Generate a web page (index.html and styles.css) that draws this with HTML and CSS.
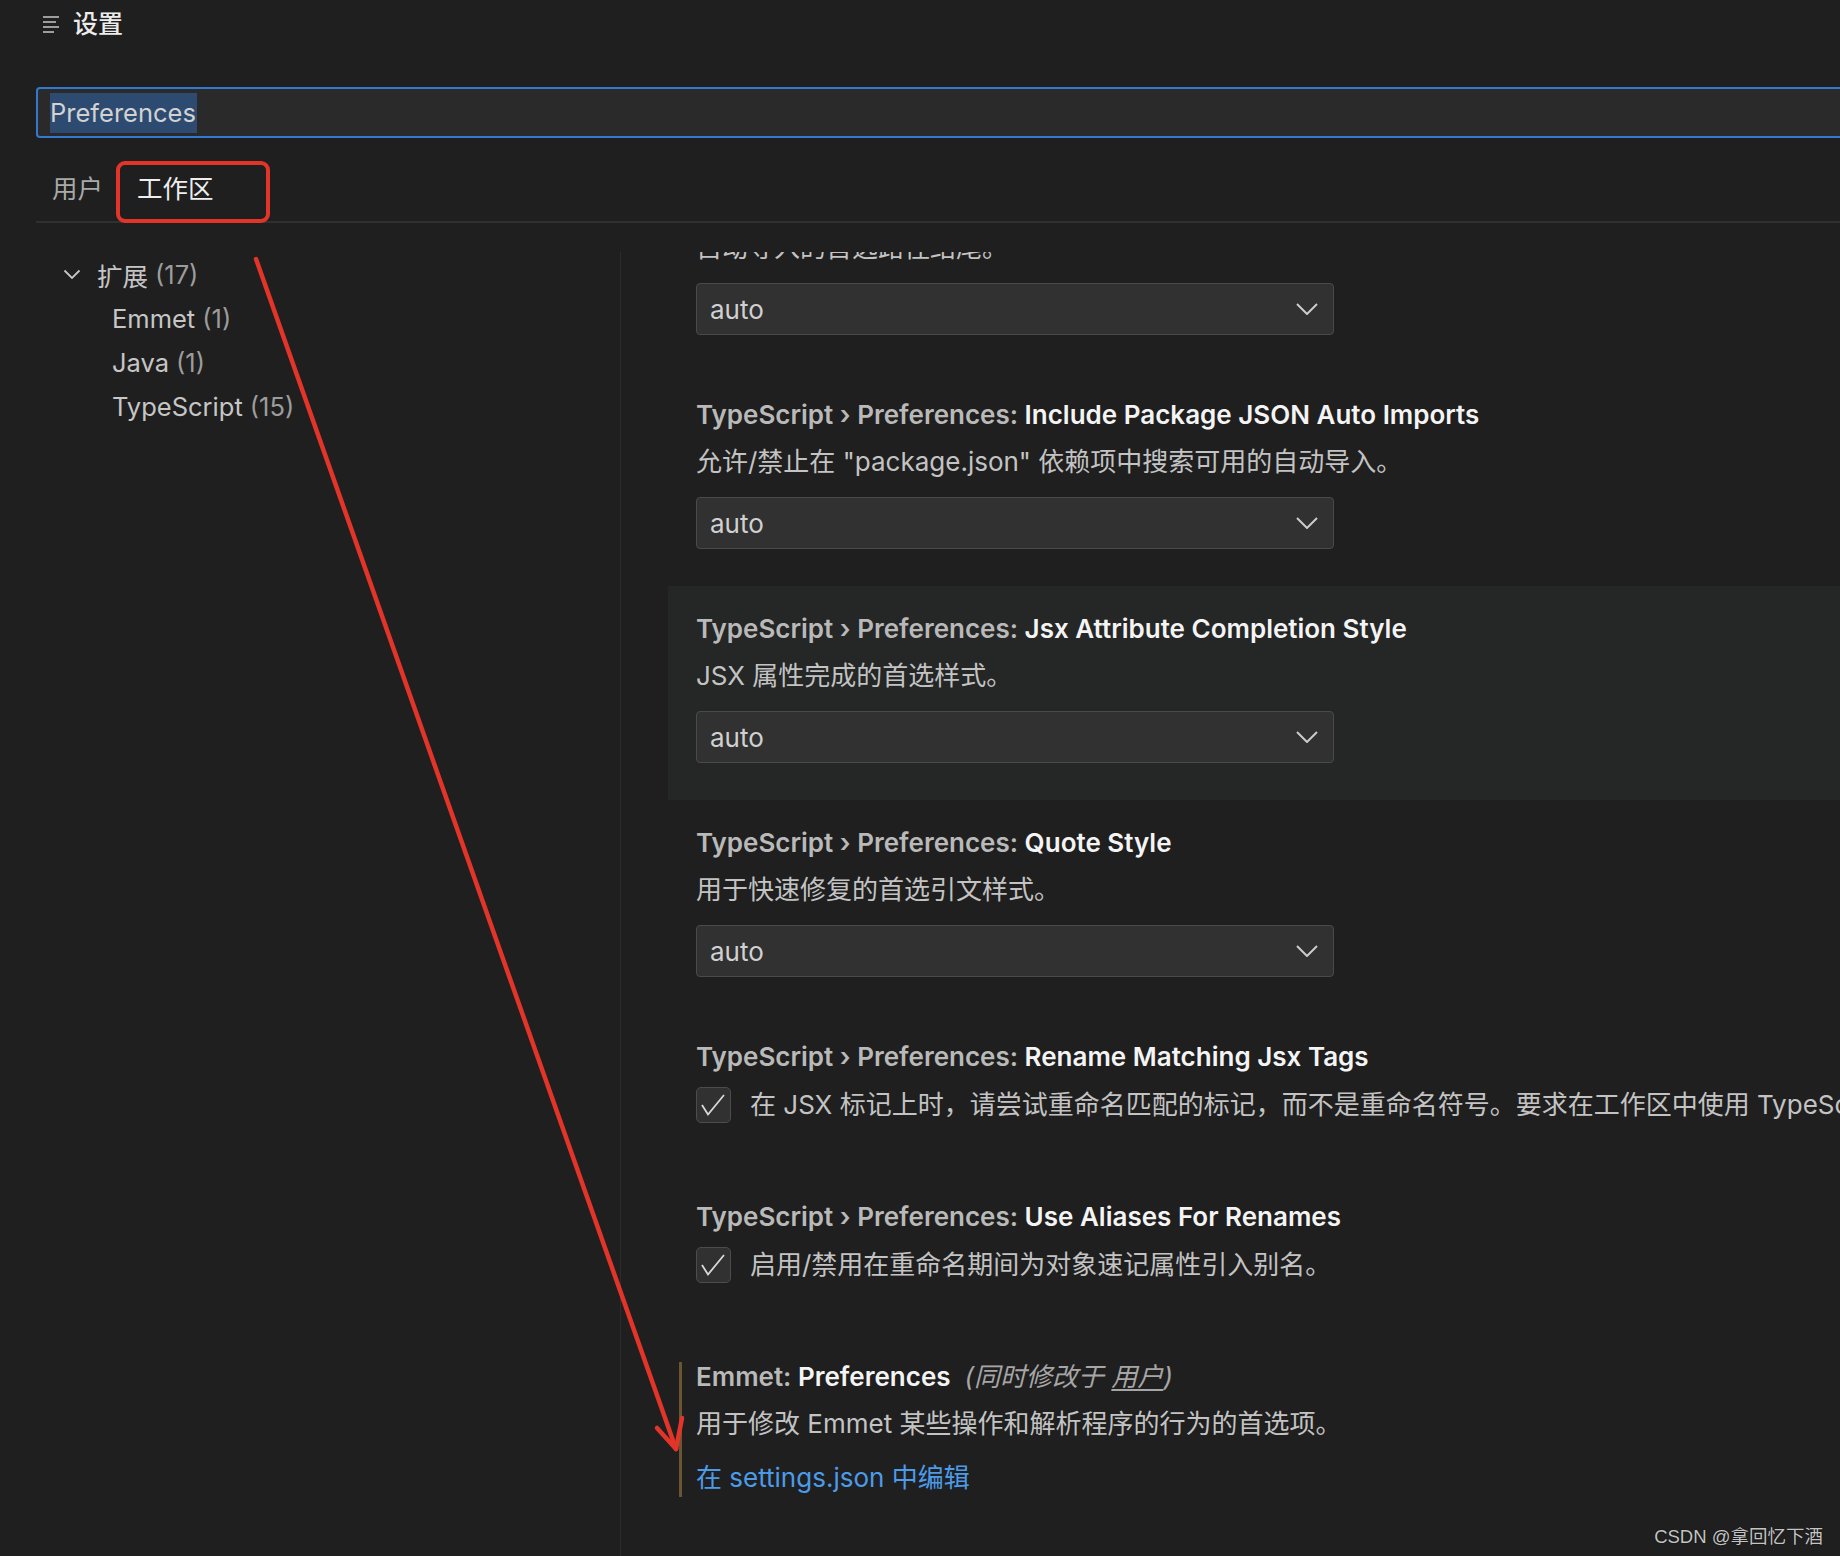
FILE: index.html
```html
<!DOCTYPE html>
<html lang="zh-CN">
<head>
<meta charset="utf-8">
<title>设置</title>
<link rel="stylesheet" href="styles.css">
</head>
<body>
<div class="app">
  <header class="titlebar">
    <svg class="menu-icon" width="17" height="18" viewBox="0 0 17 18">
      <path d="M0 2h16M0 7h13M0 12h16M0 17h11" stroke="#c8c8c8" stroke-width="1.6" fill="none"/>
    </svg>
    <span class="title-text">设置</span>
  </header>

  <div class="search"><span class="sel">Preferences</span></div>

  <nav class="tabs">
    <span class="tab">用户</span>
    <span class="tab active">工作区</span>
  </nav>

  <div class="main">
    <aside class="toc">
      <div class="toc-row toc-group">
        <svg class="toc-chev" width="18" height="10" viewBox="0 0 18 10"><path d="M1.5 1.5l7.5 7.5 7.5-7.5" stroke="#c5c5c5" stroke-width="1.8" fill="none"/></svg>
        <span class="toc-name">扩展</span><span class="toc-count">(17)</span>
      </div>
      <div class="toc-row toc-child"><span class="toc-name">Emmet</span><span class="toc-count">(1)</span></div>
      <div class="toc-row toc-child"><span class="toc-name">Java</span><span class="toc-count">(1)</span></div>
      <div class="toc-row toc-child"><span class="toc-name">TypeScript</span><span class="toc-count">(15)</span></div>
    </aside>

    <section class="list">
      <div class="scroll">
        <div class="setting">
          <div class="s-title"><span class="cat">TypeScript › Preferences: </span><span class="name">Import Module Specifier Ending</span></div>
          <div class="s-desc">自动导入的首选路径结尾。</div>
          <div class="select"><span>auto</span><svg width="22" height="12" viewBox="0 0 22 12"><path d="M1 1l10 10 10-10" stroke="#cccccc" stroke-width="2" fill="none"/></svg></div>
        </div>

        <div class="setting">
          <div class="s-title"><span class="cat">TypeScript › Preferences: </span><span class="name">Include Package JSON Auto Imports</span></div>
          <div class="s-desc">允许/禁止在 "package.json" 依赖项中搜索可用的自动导入。</div>
          <div class="select"><span>auto</span><svg width="22" height="12" viewBox="0 0 22 12"><path d="M1 1l10 10 10-10" stroke="#cccccc" stroke-width="2" fill="none"/></svg></div>
        </div>

        <div class="setting focused">
          <div class="s-title"><span class="cat">TypeScript › Preferences: </span><span class="name">Jsx Attribute Completion Style</span></div>
          <div class="s-desc">JSX 属性完成的首选样式。</div>
          <div class="select"><span>auto</span><svg width="22" height="12" viewBox="0 0 22 12"><path d="M1 1l10 10 10-10" stroke="#cccccc" stroke-width="2" fill="none"/></svg></div>
        </div>

        <div class="setting">
          <div class="s-title"><span class="cat">TypeScript › Preferences: </span><span class="name">Quote Style</span></div>
          <div class="s-desc">用于快速修复的首选引文样式。</div>
          <div class="select"><span>auto</span><svg width="22" height="12" viewBox="0 0 22 12"><path d="M1 1l10 10 10-10" stroke="#cccccc" stroke-width="2" fill="none"/></svg></div>
        </div>

        <div class="setting bool">
          <div class="s-title"><span class="cat">TypeScript › Preferences: </span><span class="name">Rename Matching Jsx Tags</span></div>
          <div class="check-row">
            <span class="checkbox"><svg width="35" height="36" viewBox="0 0 35 36"><path d="M6 18l6 9.5L28 8" stroke="#d8d8d8" stroke-width="1.8" fill="none"/></svg></span>
            <span class="s-desc inline">在 JSX 标记上时，请尝试重命名匹配的标记，而不是重命名符号。要求在工作区中使用 TypeScript 5.1+。</span>
          </div>
        </div>

        <div class="setting bool">
          <div class="s-title"><span class="cat">TypeScript › Preferences: </span><span class="name">Use Aliases For Renames</span></div>
          <div class="check-row">
            <span class="checkbox"><svg width="35" height="36" viewBox="0 0 35 36"><path d="M6 18l6 9.5L28 8" stroke="#d8d8d8" stroke-width="1.8" fill="none"/></svg></span>
            <span class="s-desc inline">启用/禁用在重命名期间为对象速记属性引入别名。</span>
          </div>
        </div>

        <div class="setting modified">
          <div class="mod-wrap">
            <div class="s-title"><span class="cat">Emmet: </span><span class="name">Preferences</span><span class="also">(同时修改于 <u>用户</u>)</span></div>
            <div class="s-desc">用于修改 Emmet 某些操作和解析程序的行为的首选项。</div>
            <div class="s-link">在 settings.json 中编辑</div>
          </div>
        </div>
      </div>
    </section>
  </div>
</div>

<div class="annot-box"></div>
<svg class="annot-arrow" width="1840" height="1556" viewBox="0 0 1840 1556">
  <g stroke="#e3342a" stroke-width="4.5" stroke-linecap="round" stroke-linejoin="round" fill="none">
    <path d="M256 259L676 1449"/>
    <path d="M657 1428L676 1449L682 1418"/>
  </g>
</svg>
<div class="watermark">CSDN @拿回忆下酒</div>
</body>
</html>
```

FILE: styles.css
```css
html, body {
  margin: 0;
  padding: 0;
}
body {
  width: 1840px;
  height: 1556px;
  overflow: hidden;
  background: #1f1f1f;
  color: #cccccc;
  font-family: "Inter", "Noto Sans CJK SC", sans-serif;
  font-size: 26px;
  position: relative;
}
.app {
  display: flex;
  flex-direction: column;
  height: 1556px;
}

/* title bar */
.titlebar {
  height: 48px;
  display: flex;
  align-items: center;
  padding-left: 43px;
  gap: 13px;
}
.menu-icon { display: block; }
.title-text {
  color: #ececec;
  font-size: 25px;
  line-height: 30px;
  font-weight: 500;
}

/* search */
.search {
  margin: 39px -20px 0 36px;
  height: 51px;
  box-sizing: border-box;
  border: 2px solid #3279cf;
  border-radius: 4px;
  background: #2a2a2a;
  display: flex;
  align-items: center;
  padding-left: 12px;
}
.sel {
  background: #2d4b70;
  color: #d2d2d2;
  font-size: 25.5px;
  line-height: 40px;
  padding-right: 1px;
}

/* tabs */
.tabs {
  margin-left: 36px;
  height: 85px;
  box-sizing: border-box;
  border-bottom: 2px solid #303030;
  display: flex;
  align-items: flex-end;
  padding: 0 0 17px 16px;
  gap: 34px;
  font-size: 25.5px;
}
.tab {
  line-height: 30px;
  color: #a9a9a9;
}
.tab.active {
  color: #eeeeee;
}

/* main */
.main {
  flex: 1;
  display: flex;
  margin-top: 29px;
  min-height: 0;
}
.toc {
  width: 620px;
  flex: none;
  border-right: 1px solid #2c2c2c;
  font-size: 25.5px;
}
.toc-row {
  height: 44px;
  display: flex;
  align-items: center;
  white-space: nowrap;
}
.toc-group {
  padding-left: 63px;
}
.toc-chev {
  margin-right: 16px;
  display: block;
}
.toc-child {
  padding-left: 112px;
}
.toc-name {
  color: #c6c6c6;
  margin-right: 7px;
}
.toc-count {
  color: #9c9c9c;
}

/* list */
.list {
  flex: 1;
  overflow: hidden;
  padding-left: 47px;
  min-width: 0;
}
.scroll {
  margin-top: -94px;
}
.setting {
  padding: 28px 0 37px 28px;
  white-space: nowrap;
}
.setting.focused {
  background: #252626;
}
.setting.bool {
  padding-bottom: 51px;
}
.s-title {
  line-height: 30px;
  height: 30px;
  margin-bottom: 17px;
  font-weight: 600;
}
.cat {
  color: #b9b9b9;
}
.name {
  color: #f4f4f4;
}
.also {
  font-weight: 400;
  font-style: italic;
  color: #a6a6a6;
  margin-left: 14px;
}
.also u {
  text-underline-offset: 3px;
}
.s-desc {
  line-height: 30px;
  color: #c3c3c3;
  margin-bottom: 20px;
}
.s-desc.inline {
  margin-bottom: 0;
}
.select {
  width: 638px;
  height: 52px;
  box-sizing: border-box;
  background: #313131;
  border: 1px solid #4a4a4a;
  border-radius: 4px;
  display: flex;
  align-items: center;
  justify-content: space-between;
  padding: 0 15px 0 13px;
  color: #d0d0d0;
  font-size: 26px;
}
.select svg { display: block; }

.setting.bool .s-title {
  margin-bottom: 15px;
}
.check-row {
  display: flex;
  align-items: center;
  gap: 19px;
  height: 36px;
}
.checkbox {
  width: 35px;
  height: 36px;
  flex: none;
  box-sizing: border-box;
  background: #313131;
  border: 1px solid #4c4c4c;
  border-radius: 5px;
  display: flex;
  align-items: center;
  justify-content: center;
  overflow: hidden;
}
.checkbox svg { display: block; flex: none; }

.mod-wrap {
  margin-left: -17px;
  padding-left: 14px;
  border-left: 3px solid #6b5530;
  padding-bottom: 4px;
}
.setting.modified .s-desc {
  margin-bottom: 24px;
}
.s-link {
  line-height: 30px;
  color: #4c9be8;
}

/* annotations */
.annot-box {
  position: absolute;
  left: 116px;
  top: 161px;
  width: 154px;
  height: 62px;
  box-sizing: border-box;
  border: 4px solid #e3342a;
  border-radius: 9px;
}
.annot-arrow {
  position: absolute;
  left: 0;
  top: 0;
  pointer-events: none;
}
.watermark {
  position: absolute;
  right: 17px;
  bottom: 8px;
  font-family: "Liberation Sans", "Noto Sans CJK SC", sans-serif;
  font-size: 18.5px;
  line-height: 22px;
  color: #c4c4c4;
  text-shadow: 0 0 1px #000;
}
```
